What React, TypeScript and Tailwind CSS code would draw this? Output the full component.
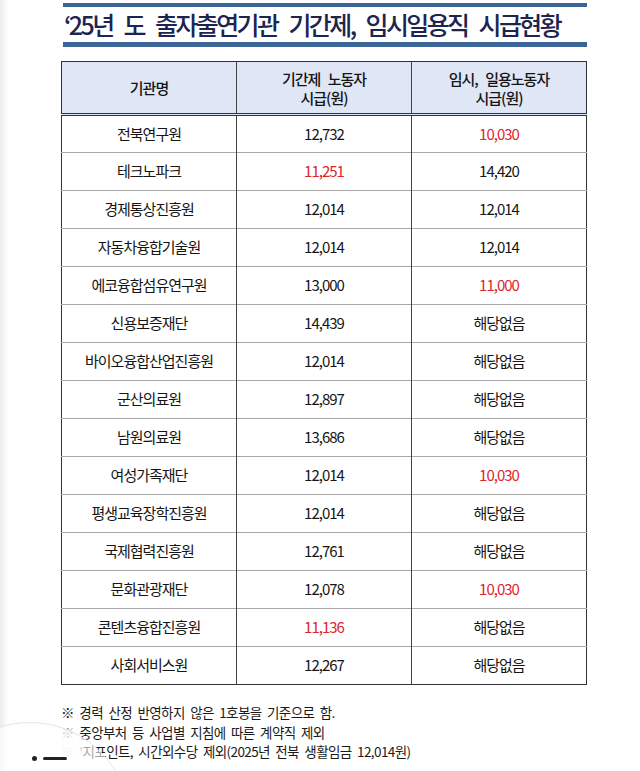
import React from "react";

type Row = {
  name: string;
  fixed: string;
  daily: string;
  fixedRed?: boolean;
  dailyRed?: boolean;
};

const rows: Row[] = [
  { name: "전북연구원", fixed: "12,732", daily: "10,030", dailyRed: true },
  { name: "테크노파크", fixed: "11,251", daily: "14,420", fixedRed: true },
  { name: "경제통상진흥원", fixed: "12,014", daily: "12,014" },
  { name: "자동차융합기술원", fixed: "12,014", daily: "12,014" },
  { name: "에코융합섬유연구원", fixed: "13,000", daily: "11,000", dailyRed: true },
  { name: "신용보증재단", fixed: "14,439", daily: "해당없음" },
  { name: "바이오융합산업진흥원", fixed: "12,014", daily: "해당없음" },
  { name: "군산의료원", fixed: "12,897", daily: "해당없음" },
  { name: "남원의료원", fixed: "13,686", daily: "해당없음" },
  { name: "여성가족재단", fixed: "12,014", daily: "10,030", dailyRed: true },
  { name: "평생교육장학진흥원", fixed: "12,014", daily: "해당없음" },
  { name: "국제협력진흥원", fixed: "12,761", daily: "해당없음" },
  { name: "문화관광재단", fixed: "12,078", daily: "10,030", dailyRed: true },
  { name: "콘텐츠융합진흥원", fixed: "11,136", daily: "해당없음", fixedRed: true },
  { name: "사회서비스원", fixed: "12,267", daily: "해당없음" },
];

const kr = "font-['Noto_Sans_CJK_KR','Noto_Sans',sans-serif]";

export default function App() {
  return (
    <main className={`relative h-[771px] w-[640px] overflow-hidden bg-white ${kr}`}>
      {/* left page edge */}
      <div className="absolute left-0 top-0 h-full w-[8px] bg-gradient-to-r from-[#ececec] to-white" />

      <div className="pl-[61px] pr-[53px] pt-[3px]">
        {/* title block */}
        <div className="ml-[2px] h-[4px] bg-[#3b6596]" />
        <h1 className="ml-[3px] flex h-[35px] items-center text-[25px] font-medium tracking-[-2.6px] text-[#1c2550] whitespace-nowrap [word-spacing:8px]">
          ‘25년 도 출자출연기관 기간제, 임시일용직 시급현황
        </h1>
        <div className="ml-[2px] h-[5px] bg-[#3b6596]" />

        {/* table */}
        <table className="mt-[14px] w-[526px] table-fixed border-collapse border-[1.5px] border-[#333] text-center text-[15px] tracking-[-1px] text-[#151515]">
          <thead>
            <tr className="h-[53px] border-b-[3px] border-double border-[#333] bg-[#dfe6f5] leading-[19px] [word-spacing:5px]">
              <th className="border-r border-[#444] font-medium">기관명</th>
              <th className="border-r border-[#444] font-medium">
                기간제 노동자
                <br />
                시급(원)
              </th>
              <th className="font-medium">
                임시, 일용노동자
                <br />
                시급(원)
              </th>
            </tr>
          </thead>
          <tbody>
            {rows.map((r) => (
              <tr key={r.name} className="h-[38px] border-b-[1.5px] border-[#a8a8a8] last:border-[#333]">
                <td className="border-r border-[#444]">{r.name}</td>
                <td className={`border-r border-[#444] ${r.fixedRed ? "text-[#e0242c]" : ""}`}>{r.fixed}</td>
                <td className={r.dailyRed ? "text-[#e0242c]" : ""}>{r.daily}</td>
              </tr>
            ))}
          </tbody>
        </table>

        {/* notes */}
        <div className="mt-[18px] text-[13.5px] leading-[19.5px] tracking-[-0.6px] text-[#1a1a1a] [word-spacing:3px]">
          <p>※ 경력 산정 반영하지 않은 1호봉을 기준으로 함.</p>
          <p>
            <span className="text-[#9a9a9a]">※</span> 중앙부처 등 사업별 지침에 따른 계약직 제외
          </p>
          <p>
            <span className="text-[#dcdcdc]">※</span>{" "}
            <span className="text-[#888]">'</span>지포인트, 시간외수당 제외(2025년 전북 생활임금 12,014원)
          </p>
        </div>
      </div>

      {/* floating circle overlay */}
      <div className="absolute left-[-70px] top-[722px] h-[200px] w-[200px] rounded-full border border-[#e6e6e6] bg-white/60" />
      <div className="absolute left-[32px] top-[756px] flex items-center gap-[6px]">
        <span className="h-[5px] w-[5px] rounded-full bg-[#222]" />
        <span className="h-[3px] w-[24px] rounded-sm bg-[#222]" />
      </div>
    </main>
  );
}
